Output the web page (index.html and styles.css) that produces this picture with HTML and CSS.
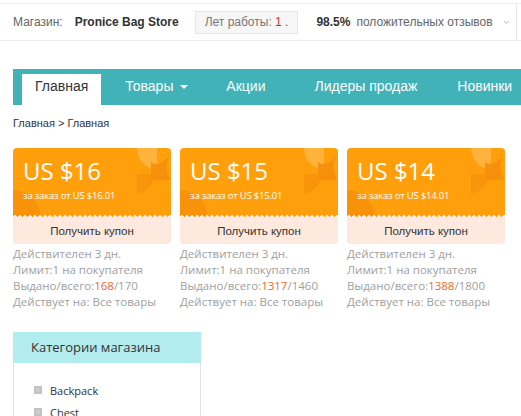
FILE: index.html
```html
<!DOCTYPE html>
<html lang="ru">
<head>
  <meta charset="UTF-8" />
  <title>Pronice Bag Store</title>
  <link rel="stylesheet" href="styles.css">
</head>
<body>

  <div class="store-bar">
    <span class="label">Магазин:</span>
    <span class="store-name">Pronice Bag Store</span>
    <span class="years">Лет работы: <b>1 .</b></span>
    <span class="rating">98.5%</span>
    <span class="label">положительных отзывов</span>
    <svg class="chev" width="7" height="5" viewBox="0 0 7 5"><path d="M1 1l2.5 2.5L6 1" fill="none" stroke="#bbb" stroke-width="1"/></svg>
  </div>

  <nav class="nav">
    <a class="active">Главная</a>
    <a>Товары <span class="caret"></span></a>
    <a>Акции</a>
    <a>Лидеры продаж</a>
    <a>Новинки</a>
  </nav>

  <div class="crumbs">Главная &gt; Главная</div>

  <div class="coupons">
    <div class="coupon">
      <div class="coupon-top">
        <svg class="deco" width="158" height="70" viewBox="0 0 158 70">
          <path d="M124 0h20v22a22 22 0 0 1-20-22z" fill="#ffb84a" opacity="0.8"/>
          <path d="M138 14q8 6 18 -6q-6 14 2 24h-20z" fill="#f58e0a" opacity="0.9"/>
          <path d="M124 26h18q-2 16-18 20z" fill="#f7920c" opacity="0.7"/>
          <path d="M0 42a28 28 0 0 1 28 28h-28z" fill="#f28a08" opacity="0.6"/>
        </svg>
        <div class="amount">US $16</div>
        <div class="min">за заказ от US $16.01</div>
      </div>
      <div class="coupon-btn">Получить купон</div>
      <ul class="terms">
        <li>Действителен 3 дн.</li>
        <li>Лимит:1 на покупателя</li>
        <li>Выдано/всего:<em>168</em>/170</li>
        <li>Действует на: Все товары</li>
      </ul>
    </div>
    <div class="coupon">
      <div class="coupon-top">
        <svg class="deco" width="158" height="70" viewBox="0 0 158 70">
          <path d="M124 0h20v22a22 22 0 0 1-20-22z" fill="#ffb84a" opacity="0.8"/>
          <path d="M138 14q8 6 18 -6q-6 14 2 24h-20z" fill="#f58e0a" opacity="0.9"/>
          <path d="M124 26h18q-2 16-18 20z" fill="#f7920c" opacity="0.7"/>
          <path d="M0 42a28 28 0 0 1 28 28h-28z" fill="#f28a08" opacity="0.6"/>
        </svg>
        <div class="amount">US $15</div>
        <div class="min">за заказ от US $15.01</div>
      </div>
      <div class="coupon-btn">Получить купон</div>
      <ul class="terms">
        <li>Действителен 3 дн.</li>
        <li>Лимит:1 на покупателя</li>
        <li>Выдано/всего:<em>1317</em>/1460</li>
        <li>Действует на: Все товары</li>
      </ul>
    </div>
    <div class="coupon">
      <div class="coupon-top">
        <svg class="deco" width="158" height="70" viewBox="0 0 158 70">
          <path d="M124 0h20v22a22 22 0 0 1-20-22z" fill="#ffb84a" opacity="0.8"/>
          <path d="M138 14q8 6 18 -6q-6 14 2 24h-20z" fill="#f58e0a" opacity="0.9"/>
          <path d="M124 26h18q-2 16-18 20z" fill="#f7920c" opacity="0.7"/>
          <path d="M0 42a28 28 0 0 1 28 28h-28z" fill="#f28a08" opacity="0.6"/>
        </svg>
        <div class="amount">US $14</div>
        <div class="min">за заказ от US $14.01</div>
      </div>
      <div class="coupon-btn">Получить купон</div>
      <ul class="terms">
        <li>Действителен 3 дн.</li>
        <li>Лимит:1 на покупателя</li>
        <li>Выдано/всего:<em>1388</em>/1800</li>
        <li>Действует на: Все товары</li>
      </ul>
    </div>
  </div>

  <div class="cats">
    <div class="cats-head">Категории магазина</div>
    <ul class="cats-list">
      <li>Backpack</li>
      <li>Chest</li>
    </ul>
  </div>

</body>
</html>
```

FILE: styles.css
```css
body {
  margin: 0;
  background: #fff;
  font-family: "Liberation Sans", Arial, sans-serif;
  color: #333;
  overflow: hidden;
}

.store-bar {
  display: flex;
  align-items: center;
  height: 36px;
  margin-top: 3px;
  padding-left: 13px;
  border-top: 1px solid #ececec;
  border-bottom: 1px solid #ececec;
  font-size: 12px;
  white-space: nowrap;
}

.store-bar .label {
  color: #666;
}

.store-name {
  margin-left: 12px;
  font-weight: bold;
  color: #333;
}

.years {
  margin-left: 16px;
  padding: 3px 9px 4px;
  background: #f6f6f6;
  border: 1px solid #e6e6e6;
  color: #777;
}

.years b {
  font-weight: normal;
  color: #c0392b;
}

.rating {
  margin-left: 18px;
  margin-right: 6px;
  font-weight: bold;
  color: #333;
}

.chev {
  margin-left: 10px;
  margin-right: 6px;
}

.store-bar::after {
  content: "";
  width: 1px;
  height: 36px;
  background: #e6e6e6;
}

.nav {
  display: flex;
  align-items: flex-end;
  height: 36px;
  margin: 28px 0 0 13px;
  padding-left: 9px;
  background: #41b2b7;
  white-space: nowrap;
}

.nav a {
  display: block;
  height: 31px;
  line-height: 25px;
  font-size: 14px;
  color: #fff;
}

.nav a.active {
  background: #fff;
  color: #333;
  padding: 0 13px;
}

.nav a:nth-child(2) { margin-left: 24px; }
.nav a:nth-child(3) { margin-left: 38px; }
.nav a:nth-child(4) { margin-left: 49px; }
.nav a:nth-child(5) { margin-left: 40px; }

.caret {
  display: inline-block;
  margin-left: 3px;
  vertical-align: middle;
  border-left: 4px solid transparent;
  border-right: 4px solid transparent;
  border-top: 4px solid #fff;
}

.crumbs {
  margin: 12px 0 0 13px;
  font-size: 11px;
  color: #333;
}

.coupons {
  display: flex;
  gap: 9px;
  margin: 19px 0 0 13px;
}

.coupon {
  width: 158px;
}

.coupon-top {
  position: relative;
  height: 69px;
  padding: 10px 0 0 10px;
  box-sizing: border-box;
  background: #ff9f0c;
  border-radius: 4px 4px 0 0;
  color: #fff;
  font-family: "Open Sans", sans-serif;
  overflow: hidden;
}

.deco {
  position: absolute;
  left: 0;
  top: 0;
}

.amount {
  position: relative;
  font-size: 24px;
  line-height: 26px;
}

.min {
  position: relative;
  margin-top: 5px;
  font-size: 9.5px;
  letter-spacing: -0.2px;
}

.coupon-btn {
  position: relative;
  height: 27px;
  line-height: 29px;
  background: #fde9dd;
  border-radius: 0 0 4px 4px;
  text-align: center;
  font-size: 11.5px;
  color: #333;
}

.coupon-btn::before {
  content: "";
  position: absolute;
  left: 0;
  right: 0;
  top: -2px;
  height: 4px;
  background: radial-gradient(circle at 2px 2px, #fde9dd 1.6px, transparent 2px) 0 0 / 5px 4px repeat-x;
}

.terms {
  list-style: none;
  margin: 2px 0 0;
  padding: 0;
  font-family: "Open Sans", sans-serif;
  font-size: 11.5px;
  line-height: 16px;
  color: #a0a0a0;
}

.terms em {
  font-style: normal;
  color: #f06a20;
}

.cats {
  width: 188px;
  margin: 22px 0 0 13px;
  font-family: "Open Sans", sans-serif;
}

.cats-head {
  height: 31px;
  line-height: 31px;
  padding-left: 18px;
  background: #b3ecee;
  font-size: 13px;
  color: #333;
}

.cats-list {
  list-style: none;
  margin: 0;
  padding: 16px 0 0 20px;
  border-left: 1px solid #e3e3e3;
  border-right: 1px solid #e3e3e3;
  font-size: 11px;
  color: #333;
}

.cats-list li {
  display: flex;
  align-items: center;
  height: 22px;
}

.cats-list li::before {
  content: "";
  width: 8px;
  height: 8px;
  margin-right: 8px;
  background: #ccc;
  box-shadow: inset 0 0 0 2px #c2c2c2;
}
```
